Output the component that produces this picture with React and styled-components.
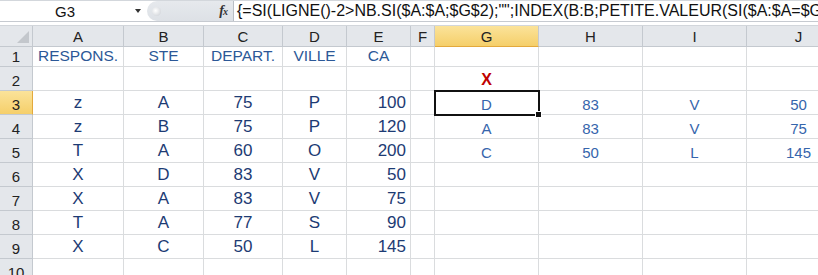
import React from 'react';
import styled, { createGlobalStyle, css } from 'styled-components';

const GlobalStyle = createGlobalStyle`
  html, body {
    margin: 0;
    padding: 0;
    background: #ffffff;
    overflow: hidden;
  }
`;

const font = `"Liberation Sans", Arial, sans-serif`;

const COLS = [33, 91, 80, 79, 64, 64, 24, 104, 104, 104, 104];
const LETTERS = ['A', 'B', 'C', 'D', 'E', 'F', 'G', 'H', 'I', 'J'];
const ROW_HEIGHTS = [20, 24, 24, 24, 24, 24, 24, 24, 24, 24];

const Sheet = styled.div`
  width: 818px;
  height: 275px;
  overflow: hidden;
  font-family: ${font};
  background: #ffffff;
`;

const FormulaBar = styled.div`
  display: flex;
  height: 22px;
  box-sizing: border-box;
  border-top: 1px solid #d3d7dc;
  border-bottom: 1px solid #c6cad0;
`;

const NameBox = styled.div`
  width: 147px;
  display: flex;
  align-items: center;
  background: #ffffff;
`;

const CellName = styled.span`
  width: 130px;
  text-align: center;
  font-size: 15px;
  color: #111;
`;

const DropArrow = styled.span`
  width: 0;
  height: 0;
  margin-left: 5px;
  border-left: 3.5px solid transparent;
  border-right: 3.5px solid transparent;
  border-top: 4px solid #333;
`;

const Buttons = styled.div`
  width: 86px;
  display: flex;
  align-items: center;
  justify-content: space-between;
  padding: 0 6px 0 5px;
  box-sizing: border-box;
  background: linear-gradient(#e6e9ed, #dde1e6);
  border-radius: 11px 0 0 11px;
`;

const Knob = styled.span`
  width: 9px;
  height: 9px;
  border-radius: 50%;
  background: radial-gradient(circle at 40% 40%, #ffffff, #c8ccd2);
`;

const Fx = styled.span`
  font-family: "Liberation Serif", "Times New Roman", serif;
  font-style: italic;
  font-weight: bold;
  font-size: 14px;
  color: #333;
  letter-spacing: -1px;

  small {
    font-size: 10px;
  }
`;

const FormulaInput = styled.div`
  flex: 1;
  display: flex;
  align-items: center;
  padding-left: 3px;
  border-left: 1px solid #b9bec5;
  font-size: 16px;
  color: #111;
  white-space: nowrap;
  overflow: hidden;
`;

const Spacer = styled.div`
  height: 4px;
  box-sizing: border-box;
  border-bottom: 1px solid #d2d6db;
`;

const Grid = styled.div`
  display: grid;
  grid-template-columns: ${COLS.map((w) => `${w}px`).join(' ')};
  grid-template-rows: 21px ${ROW_HEIGHTS.map((h) => `${h}px`).join(' ')};
`;

const headBase = css`
  box-sizing: border-box;
  display: flex;
  align-items: center;
  justify-content: center;
  font-size: 15px;
  color: #222;
  background: #e4e7eb;
  border-right: 1px solid #c4c9cf;
  border-bottom: 1px solid #c4c9cf;
`;

const activeHead = css`
  background: linear-gradient(#fbe39a, #f5cf6a);
  color: #222;
`;

const Corner = styled.div`
  ${headBase};
  position: relative;

  &::after {
    content: '';
    position: absolute;
    right: 3px;
    bottom: 3px;
    width: 0;
    height: 0;
    border-left: 12px solid transparent;
    border-bottom: 12px solid #c3c7cc;
  }
`;

const ColHead = styled.div`
  ${headBase};
  ${({ $active }) => $active && activeHead};
  ${({ $active }) => $active && 'border-bottom-color: #e3a93c;'}
`;

const RowHead = styled.div`
  ${headBase};
  align-items: flex-end;
  padding-bottom: 1px;
  ${({ $active }) => $active && activeHead};
  ${({ $active }) => $active && 'border-right-color: #e3a93c;'}
`;

const tones = {
  head: css`
    font-size: 15.5px;
    color: #2c5897;
  `,
  data: css`
    font-size: 17px;
    color: #1d3b74;
  `,
  result: css`
    font-size: 15px;
    color: #3665ac;
  `,
  flag: css`
    font-size: 16px;
    font-weight: bold;
    color: #c00000;
  `,
};

const Cell = styled.div`
  position: relative;
  box-sizing: border-box;
  display: flex;
  align-items: flex-end;
  justify-content: ${({ $align }) =>
    $align === 'right' ? 'flex-end' : $align === 'left' ? 'flex-start' : 'center'};
  padding: 0 4px 1px;
  border-right: 1px solid #dadcde;
  border-bottom: 1px solid #dadcde;
  white-space: nowrap;
  line-height: 1.15;
  ${({ $tone }) => tones[$tone] || tones.result};
  ${({ $selected }) =>
    $selected &&
    css`
      z-index: 1;
      outline: 2px solid #111;
      outline-offset: -1px;
    `}
`;

const Handle = styled.span`
  position: absolute;
  right: -4px;
  bottom: -4px;
  width: 5px;
  height: 5px;
  background: #111;
  border: 1px solid #fff;
  z-index: 2;
`;

const source = [
  ['z', 'A', '75', 'P', '100'],
  ['z', 'B', '75', 'P', '120'],
  ['T', 'A', '60', 'O', '200'],
  ['X', 'D', '83', 'V', '50'],
  ['X', 'A', '83', 'V', '75'],
  ['T', 'A', '77', 'S', '90'],
  ['X', 'C', '50', 'L', '145'],
];

const results = [
  ['D', '83', 'V', '50'],
  ['A', '83', 'V', '75'],
  ['C', '50', 'L', '145'],
];

const headers = ['RESPONS.', 'STE', 'DEPART.', 'VILLE', 'CA'];

function buildRow(r) {
  // r is the 1-based sheet row number; returns 10 cell descriptors
  const cells = LETTERS.map(() => ({ text: '', tone: 'result', align: 'center' }));
  if (r === 1) {
    headers.forEach((h, i) => {
      cells[i] = { text: h, tone: 'head', align: 'center' };
    });
  }
  if (r === 2) {
    cells[6] = { text: 'X', tone: 'flag', align: 'center' };
  }
  if (r >= 3 && r <= 9) {
    source[r - 3].forEach((v, i) => {
      cells[i] = { text: v, tone: 'data', align: i === 4 ? 'right' : 'center' };
    });
  }
  if (r >= 3 && r <= 5) {
    results[r - 3].forEach((v, i) => {
      cells[6 + i] = { text: v, tone: 'result', align: 'center' };
    });
  }
  return cells;
}

const App = () => {
  const formula = '{=SI(LIGNE()-2>NB.SI($A:$A;$G$2);"";INDEX(B:B;PETITE.VALEUR(SI($A:$A=$G$2;LIGNE($A:$A));LIGNE()-2)))}';

  return (
    <Sheet>
      <GlobalStyle />
      <FormulaBar>
        <NameBox>
          <CellName>G3</CellName>
          <DropArrow />
        </NameBox>
        <Buttons>
          <Knob />
          <Fx>
            f<small>x</small>
          </Fx>
        </Buttons>
        <FormulaInput>{formula}</FormulaInput>
      </FormulaBar>
      <Spacer />
      <Grid>
        <Corner />
        {LETTERS.map((l) => (
          <ColHead key={l} $active={l === 'G'}>
            {l}
          </ColHead>
        ))}
        {ROW_HEIGHTS.map((_, idx) => {
          const r = idx + 1;
          return (
            <React.Fragment key={r}>
              <RowHead $active={r === 3}>{r}</RowHead>
              {buildRow(r).map((c, ci) => {
                const selected = r === 3 && ci === 6;
                return (
                  <Cell
                    key={ci}
                    $tone={c.tone}
                    $align={c.align}
                    $selected={selected}
                  >
                    {c.text}
                    {selected && <Handle />}
                  </Cell>
                );
              })}
            </React.Fragment>
          );
        })}
      </Grid>
    </Sheet>
  );
};

export default App;
